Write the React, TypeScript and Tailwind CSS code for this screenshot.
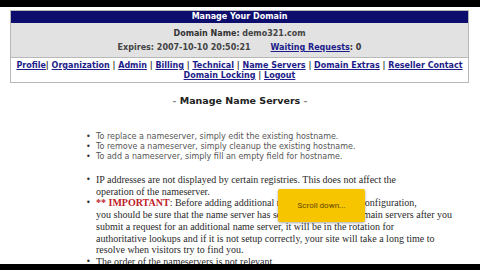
import React from "react";

const navLinks1 = ["Organization", "Admin", "Billing", "Technical", "Name Servers", "Domain Extras", "Reseller Contact"];

export default function App() {
  const link = "text-[#1c1c8a] underline";
  return (
    <div className="w-[480px] h-[270px] bg-black flex flex-col overflow-hidden">
      <div className="h-[7px] shrink-0 bg-black" />
      <div className="relative flex-1 bg-white overflow-hidden">
        <div className="pt-[3px] pl-[10px]">
          <div className="w-[459px] border border-[#b8b8b8] bg-[#e2e2e2] font-['DejaVu_Sans',sans-serif]">
            <div className="h-[12px] bg-[#0d0d6e] text-white font-bold text-[8px] leading-[12px] text-center">
              Manage Your Domain
            </div>
            <div className="h-[34px] flex flex-col items-center pt-[5px] text-[#333] text-[8px]">
              <div className="leading-[12px]">
                <span className="font-bold">Domain Name:</span> <span className="font-bold text-[#444]">demo321.com</span>
              </div>
              <div className="leading-[12px] mt-[2px] flex gap-[20px]">
                <span className="font-bold text-[#444]">Expires: 2007-10-10 20:50:21</span>
                <span className="font-bold">
                  <span className={link}>Waiting Requests</span>: 0
                </span>
              </div>
            </div>
            <div className="bg-white border-t border-[#b8b8b8] h-[25px] pt-[3px] text-center text-[8px] leading-[9.5px] font-bold text-[#333] whitespace-nowrap">
              <div>
                <span className={link}>Profile</span>|{" "}
                {navLinks1.map((l, i) => (
                  <React.Fragment key={l}>
                    <span className={link}>{l}</span>
                    {i < navLinks1.length - 1 ? " | " : ""}
                  </React.Fragment>
                ))}
              </div>
              <div>
                <span className={link}>Domain Locking</span> | <span className={link}>Logout</span>
              </div>
            </div>
          </div>
        </div>

        <div className="mt-[12px] text-center font-['DejaVu_Sans',sans-serif] font-bold text-[9.5px] leading-[12px] text-[#222]">
          <span className="text-[#888]">- </span>Manage Name Servers<span className="text-[#888]"> -</span>
        </div>

        <div className="mt-[25px] pl-[86px] font-['DejaVu_Sans',sans-serif] text-[8px] leading-[10px] text-[#555] whitespace-nowrap">
          <div className="flex"><span className="w-[10px] text-[#333]">•</span>To replace a nameserver, simply edit the existing hostname.</div>
          <div className="flex"><span className="w-[10px] text-[#333]">•</span>To remove a nameserver, simply cleanup the existing hostname.</div>
          <div className="flex"><span className="w-[10px] text-[#333]">•</span>To add a nameserver, simply fill an empty field for hostname.</div>
        </div>

        <div className="mt-[12px] pl-[86px] font-['Liberation_Serif',serif] text-[10px] leading-[11.7px] text-[#2a2a2a] whitespace-nowrap">
          <div className="flex">
            <span className="w-[10px] font-['DejaVu_Sans',sans-serif] text-[8px]">•</span>
            <div>
              <div>IP addresses are not displayed by certain registries. This does not affect the</div>
              <div>operation of the nameserver.</div>
            </div>
          </div>
          <div className="flex">
            <span className="w-[10px] font-['DejaVu_Sans',sans-serif] text-[8px]">•</span>
            <div>
              <div>
                <span className="text-[#c0202a] font-bold">** IMPORTANT</span>: Before adding additional nameservers to your configuration,
              </div>
              <div>you should be sure that the name server has setup to resolve the domain servers after you</div>
              <div>submit a request for an additional name server, it will be in the rotation for</div>
              <div>authoritative lookups and if it is not setup correctly, your site will take a long time to</div>
              <div>resolve when visitors try to find you.</div>
            </div>
          </div>
          <div className="flex">
            <span className="w-[10px] font-['DejaVu_Sans',sans-serif] text-[8px]">•</span>
            <div>The order of the nameservers is not relevant.</div>
          </div>
        </div>

        <div className="absolute left-[278px] top-[182px] w-[87px] h-[33px] bg-[#f6c500] rounded-[2px] shadow-[0_1px_3px_rgba(0,0,0,0.35)] flex items-center justify-center font-['Roboto',sans-serif] text-[8px] text-[#5e4400]">
          Scroll down...
        </div>
      </div>
      <div className="h-[6px] shrink-0 bg-black" />
    </div>
  );
}
